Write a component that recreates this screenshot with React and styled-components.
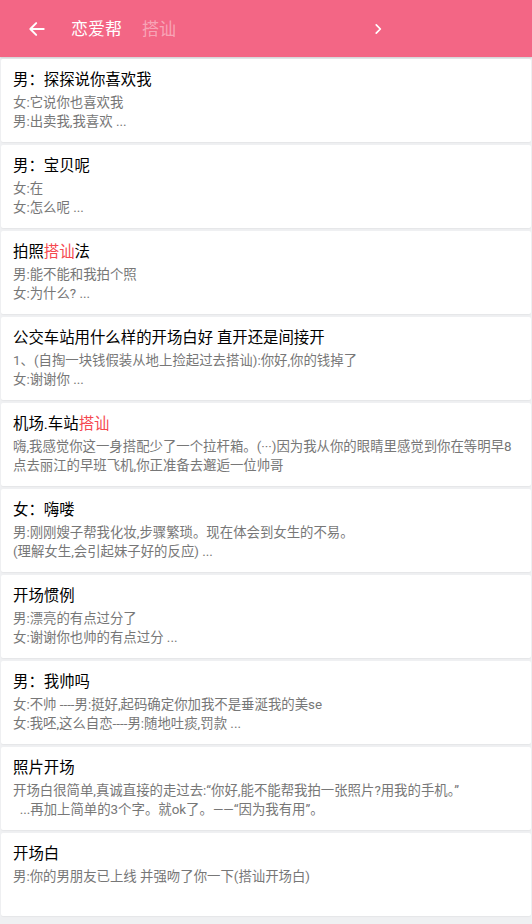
import React from "react";
import styled, { createGlobalStyle } from "styled-components";

const GlobalStyle = createGlobalStyle`
  html, body {
    margin: 0;
    padding: 0;
    background: #eff0f2;
    font-family: Roboto, "Noto Sans CJK SC", sans-serif;
  }
`;

const items = [
  { title: "男：探探说你喜欢我", lines: ["女:它说你也喜欢我", "男:出卖我,我喜欢 ..."] },
  { title: "男：宝贝呢", lines: ["女:在", "女:怎么呢 ..."] },
  { title: "拍照", hl: "搭讪", after: "法", lines: ["男:能不能和我拍个照", "女:为什么? ..."] },
  { title: "公交车站用什么样的开场白好 直开还是间接开", lines: ["1、(自掏一块钱假装从地上捡起过去搭讪):你好,你的钱掉了", "女:谢谢你 ..."] },
  { title: "机场.车站", hl: "搭讪", lines: ["嗨,我感觉你这一身搭配少了一个拉杆箱。(···)因为我从你的眼睛里感觉到你在等明早8点去丽江的早班飞机,你正准备去邂逅一位帅哥"] },
  { title: "女：嗨喽", lines: ["男:刚刚嫂子帮我化妆,步骤繁琐。现在体会到女生的不易。", "(理解女生,会引起妹子好的反应) ..."] },
  { title: "开场惯例", lines: ["男:漂亮的有点过分了", "女:谢谢你也帅的有点过分 ..."] },
  { title: "男：我帅吗", lines: ["女:不帅 ----男:挺好,起码确定你加我不是垂涎我的美se", "女:我呸,这么自恋----男:随地吐痰,罚款 ..."] },
  { title: "照片开场", lines: ["开场白很简单,真诚直接的走过去:“你好,能不能帮我拍一张照片?用我的手机。”", "  ...再加上简单的3个字。就ok了。——“因为我有用”。"] },
  { title: "开场白", lines: ["男:你的男朋友已上线 并强吻了你一下(搭讪开场白)"] },
];

function App() {
  return (
    <Page>
      <GlobalStyle />
      <Header>
        <IconBtn>
          <svg width="20" height="20" viewBox="0 0 24 24" fill="none" stroke="#fff" strokeWidth="2.4" strokeLinecap="round" strokeLinejoin="round">
            <path d="M20 12H5" />
            <path d="M11 5l-7 7 7 7" />
          </svg>
        </IconBtn>
        <Tab>恋爱帮</Tab>
        <Tab $dim>搭讪</Tab>
        <Next>
          <svg width="14" height="14" viewBox="0 0 24 24" fill="none" stroke="#fff" strokeWidth="3" strokeLinecap="round" strokeLinejoin="round">
            <path d="M9 5l7 7-7 7" />
          </svg>
        </Next>
      </Header>
      <List>
        {items.map((it, i) => (
          <Card key={i}>
            <Title>
              {it.title}
              {it.hl && <Hl>{it.hl}</Hl>}
              {it.after}
            </Title>
            <Body>
              {it.lines.map((l, j) => (
                <Line key={j}>{l}</Line>
              ))}
            </Body>
          </Card>
        ))}
      </List>
    </Page>
  );
}

const Page = styled.div`
  width: 532px;
  min-height: 924px;
  background: #eff0f2;
`;
const Header = styled.div`
  height: 57px;
  background: #f36685;
  display: flex;
  align-items: center;
  box-shadow: 0 1px 2px rgba(0, 0, 0, 0.15);
`;
const IconBtn = styled.div`
  width: 24px;
  height: 24px;
  margin-left: 25px;
  margin-right: 22px;
  display: flex;
  align-items: center;
  justify-content: center;
`;
const Tab = styled.div`
  font-size: 17px;
  color: ${(p) => (p.$dim ? "rgba(255,255,255,0.42)" : "#fff")};
  margin-right: 20px;
  line-height: 24px;
`;
const Next = styled.div`
  margin-left: 175px;
  display: flex;
  align-items: center;
`;
const List = styled.div`
  display: flex;
  flex-direction: column;
  gap: 3px;
  padding: 2px 1px 10px;
`;
const Card = styled.div`
  background: #fff;
  border-radius: 2px;
  height: 83px;
  box-sizing: border-box;
  padding: 11px 12px 0;
  box-shadow: 0 1px 1px rgba(0, 0, 0, 0.04);
`;
const Title = styled.div`
  font-size: 15.4px;
  color: #000;
  line-height: 20px;
  margin-bottom: 3px;
`;
const Hl = styled.span`
  color: #f5484f;
`;
const Body = styled.div`
  font-size: 13.4px;
  color: #777;
  line-height: 19px;
`;
const Line = styled.div`
  white-space: pre-wrap;
`;

export default App;
